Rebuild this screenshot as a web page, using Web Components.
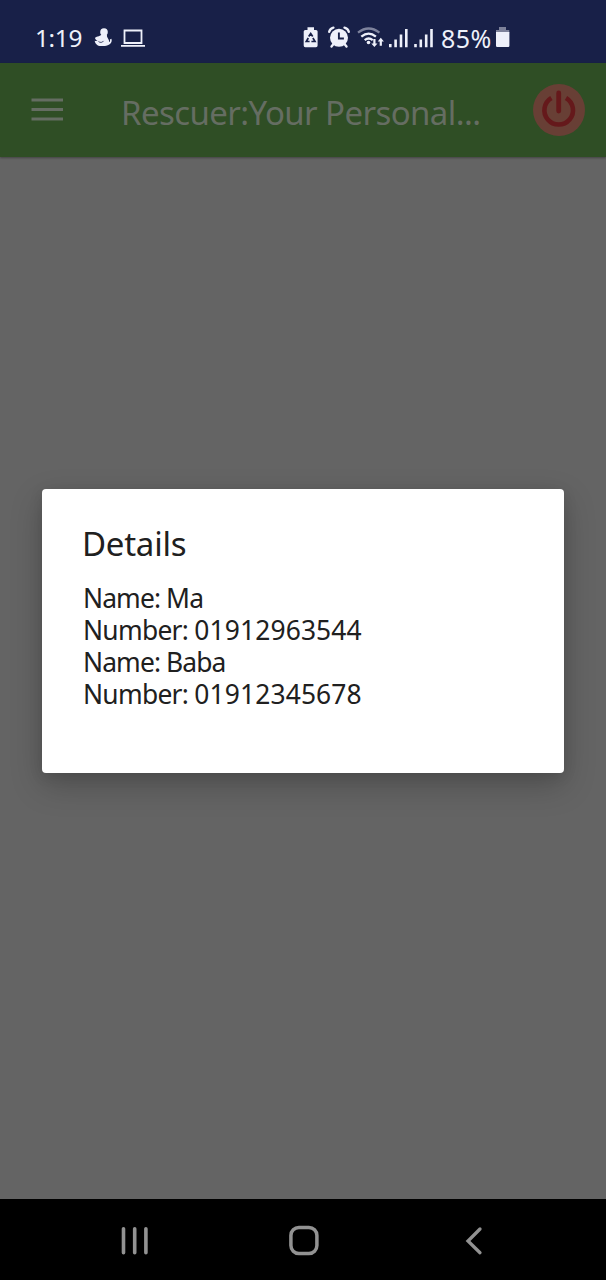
<!DOCTYPE html>
<html lang="en"><head><meta charset="utf-8"><title>Rescuer</title>
<style>
html,body{margin:0;height:100%;background:#646464}
body{font-family:"Noto Sans","Open Sans",sans-serif;overflow:hidden}
</style></head><body>
<rescuer-app></rescuer-app>
<script>
const define=(name,html)=>customElements.define(name,class extends HTMLElement{
  constructor(){super();this.attachShadow({mode:'open'}).innerHTML='<style>*{box-sizing:border-box}svg{display:block;flex:none;overflow:visible}</style>'+html;}
});

define('status-bar',`<style>
:host{display:flex;height:63px;padding:13px 96px 0 35px;background:#182048;color:#eef0fa;font-size:24.4px;line-height:50px;justify-content:space-between}
div{display:flex;height:50px}span{display:block;white-space:nowrap}
.l span{width:59px;letter-spacing:-.35px}.r{width:208px;margin-right:0}.r span{width:54px;font-size:25px;letter-spacing:.4px}
</style>
<div class="l"><span>1:19</span>
<svg width="53" height="50" viewBox="94 13 53 50" fill="#eef0fa">
<circle cx="104" cy="32" r="3.800"/><path d="M101.500 34.500h5.500c-.6 2.500 1.200 3.600 1.800 5.500.4 1.200.2 2 .2 2 1-.1 1.300-1.300.9-2.600l1.500-.6c1.100 3.100-.9 5.700-4.300 6.700-2.300.7-7.600.9-9.600-.3-1.600-1-2.700-2.700-2.800-4.400 1.300.4 2.300.2 2.800-.2-1.300-.7-2.600-1.400-2.400-2.700.2-1.200 4.700-1.400 6.400-3.400z"/><path d="M98.500 41.500c1.500 1.300 4 1.300 5-.6" fill="none" stroke="#182048" stroke-width=".8"/>
<path d="M124.500 30.500h17v12.500h-17zM121 45.800h24" fill="none" stroke="#eef0fa" stroke-width="1.800"/>
</svg></div>
<div class="r"><svg width="139" height="50" viewBox="302 13 139 50" fill="#eef0fa">
<path d="M307.500 27.300h6.500v2.700h2a1.600 1.600 0 0 1 1.600 1.600v14a1.600 1.600 0 0 1-1.600 1.600h-10.700a1.600 1.600 0 0 1-1.600-1.600v-14a1.600 1.600 0 0 1 1.600-1.600h2.200z"/>
<path d="M308.700 36.500l2-3 2 3M308.300 38l-2 3.500h3.300M312.900 38l2.100 3.500h-3.600" fill="none" stroke="#182048" stroke-width="1.700"/>
<circle cx="339" cy="37.800" r="9"/><path d="M329.200 31.800q.8-3.400 4.200-4.200M344.500 27.600q3.500.8 4.300 4.200M333.500 44l-2 2.500M344.500 44l2 2.500" fill="none" stroke="#eef0fa" stroke-width="2.400" stroke-linecap="round"/><path d="M338.900 32.500v6h5" fill="none" stroke="#182048" stroke-width="1.900"/>
<g fill="none" stroke="#eef0fa" stroke-width="2.300"><path d="M358 32.700q10.700-8.300 21.400 0" opacity=".48"/><path d="M361.300 36.600q7.300-6 14.600 0M364.700 40.100q4-3.200 8 0"/></g><circle cx="368.500" cy="42.500" r="1.800"/>
<path d="M373.300 39h2.200v4.500h2l-3.100 3.500-3.100-3.500h2zM379.700 45.700h2.200v-4.200h2l-3.100-3.800-3.100 3.800h2z"/>
<path d="M389 44h2.600v3.200H389zM394.300 39.500h2.600v7.700h-2.600zM399.700 34.500h2.600v12.700h-2.600zM405 29h2.600v18.200H405z"/>
<path d="M414.200 44h2.600v3.200h-2.600zM419.500 39.500h2.600v7.700h-2.600zM424.900 34.500h2.600v12.700h-2.600zM430.200 29h2.600v18.200h-2.600z"/>
</svg><span>85%</span><svg width="15" height="50" viewBox="495 13 15 50"><path d="M499 27h7v3h3.300v2.500H496V30h3z" fill="#7d819a"/><path d="M496 32h13.400v13.800a1.200 1.200 0 0 1-1.200 1.200h-11a1.200 1.200 0 0 1-1.200-1.200z" fill="#eef0fa"/></svg></div>`);

define('app-bar',`<style>
:host{display:flex;align-items:center;height:94px;padding:0 20px 0 31px;background:#2f4e25;color:#656d62;box-shadow:0 1px 2px #0005;position:relative}
h1{margin:6px auto 0 58px;font-weight:400;font-size:33px;line-height:46px;letter-spacing:-.6px;white-space:nowrap}
.power{margin-top:1px}
</style>
<svg width="32" height="24" viewBox="0 0 32 24" fill="#656d62"><path d="M.5.500h31.500v3H.5zM.5 10h31.500v3H.5zM.5 19.500h31.500v3H.5z"/></svg>
<h1><slot></slot></h1>
<svg class="power" width="53" height="53" viewBox="0 0 53 53"><circle cx="26" cy="26" r="26" fill="#683f35"/><g fill="none" stroke="#65191b"><path d="M18.400 13.900A14.300 14.300 0 1 0 33 13.900" stroke-width="4.600"/><path d="M25.700 9v18" stroke-width="4.800" stroke-linecap="round"/></g></svg>`);

define('contact-line',`<style>
:host{display:block;height:32px;font-size:26.400px;line-height:32px;white-space:pre;letter-spacing:-.88px}
:host([numeric]){letter-spacing:-.72px}
</style><slot></slot>`);

define('details-dialog',`<style>
:host{display:block;width:522px;height:284px;padding:34px 41px;background:#fff;border-radius:4px;color:#202020;box-shadow:0 12px 32px rgba(0,0,0,.22),0 3px 14px rgba(0,0,0,.1)}
h2{margin:0 0 17px -1px;font-weight:400;font-size:33px;line-height:42px;letter-spacing:-.25px}
</style><h2>Details</h2><slot></slot>`);

define('nav-bar',`<style>
:host{display:flex;height:81px;align-items:center;padding:2px 0 0 120px;background:#000}
.home{margin:0 147px 0 140px}
</style>
<svg width="29" height="30" viewBox="0 0 29 30"><path d="M3.500 2.800v24M14.700 2.800v24M25.900 2.800v24" stroke="#929292" stroke-width="3.600" stroke-linecap="round"/></svg>
<svg class="home" width="30" height="30" viewBox="0 0 30 30"><rect x="1.900" y="1.500" width="26" height="26" rx="8" fill="none" stroke="#929292" stroke-width="3.500"/></svg>
<svg width="18" height="30" viewBox="0 0 18 30"><path d="M14 3L2 15 14 26.700" fill="none" stroke="#929292" stroke-width="3.300" stroke-linecap="round"/></svg>`);

define('rescuer-app',`<style>
:host{display:flex;flex-direction:column;width:606px;height:1280px}
main{flex:1;background:#646464;padding:332px 42px 0}
.digits{letter-spacing:.14px}
</style>
<status-bar></status-bar><app-bar>Rescuer:Your Personal...</app-bar>
<main><details-dialog><contact-line>Name: Ma</contact-line><contact-line numeric>Number: <span class="digits">01912963544</span></contact-line><contact-line>Name: Baba</contact-line><contact-line numeric>Number: <span class="digits">01912345678</span></contact-line></details-dialog></main>
<nav-bar></nav-bar>`);
</script></body></html>
